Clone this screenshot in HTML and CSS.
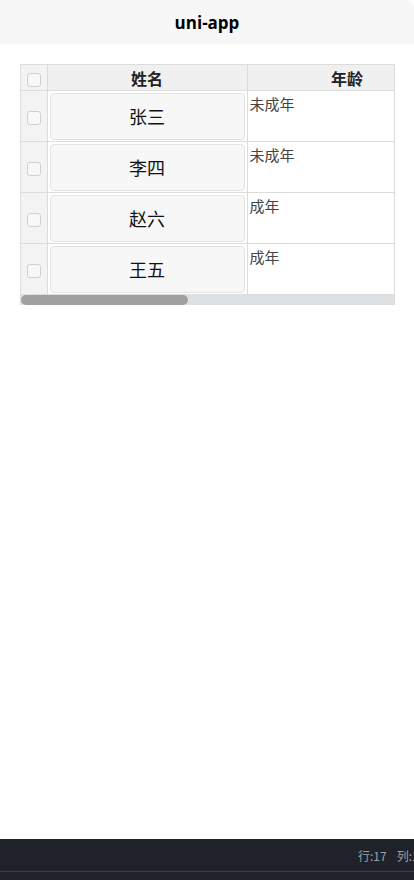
FILE: index.html
```html
<!DOCTYPE html>
<html lang="zh-CN">
<head>
    <meta charset="UTF-8">
    <meta name="viewport" content="width=device-width, initial-scale=1.0">
    <title>uni-app</title>
    <link rel="stylesheet" href="styles.css">
</head>
<body>
    <header class="nav-bar">
        <h1>uni-app</h1>
    </header>
    <main class="page">
        <div class="table-wrap">
            <div class="table-view">
                <table class="data-table">
                    <colgroup>
                        <col class="col-check">
                        <col class="col-main">
                        <col class="col-main">
                    </colgroup>
                    <thead>
                        <tr>
                            <th class="check-cell"><span class="checkbox"></span></th>
                            <th>姓名</th>
                            <th>年龄</th>
                        </tr>
                    </thead>
                    <tbody>
                        <tr>
                            <td class="check-cell"><span class="checkbox"></span></td>
                            <td class="name-cell"><div class="name-box">张三</div></td>
                            <td>未成年</td>
                        </tr>
                        <tr>
                            <td class="check-cell"><span class="checkbox"></span></td>
                            <td class="name-cell"><div class="name-box">李四</div></td>
                            <td>未成年</td>
                        </tr>
                        <tr>
                            <td class="check-cell"><span class="checkbox"></span></td>
                            <td class="name-cell"><div class="name-box">赵六</div></td>
                            <td>成年</td>
                        </tr>
                        <tr>
                            <td class="check-cell"><span class="checkbox"></span></td>
                            <td class="name-cell"><div class="name-box">王五</div></td>
                            <td>成年</td>
                        </tr>
                    </tbody>
                </table>
            </div>
            <div class="scroll-track"><div class="scroll-thumb"></div></div>
        </div>
    </main>
    <footer class="status-bar">
        <div class="status-inner">
            <span class="pos">行:17</span>
            <span class="pos">列:1</span>
        </div>
    </footer>
</body>
</html>
```

FILE: styles.css
```css
* { box-sizing: border-box; }
html, body { margin: 0; padding: 0; }
body { width: 414px; height: 880px; display: flex; flex-direction: column; overflow: hidden; background-color: #fff; color: #333; font-family: "Open Sans", "Noto Sans CJK SC", sans-serif; }

.nav-bar { height: 44px; flex: none; background-color: #f7f7f8; border-top-right-radius: 8px; display: flex; align-items: center; justify-content: center; }
.nav-bar h1 { margin: 0; font-size: 17px; font-weight: bold; color: #000; }

.page { flex: 1; padding: 20px 20px 0; }

.table-wrap { width: 375px; border-left: 1px solid #dcdcdc; border-right: 1px solid #dcdcdc; }
.table-view { overflow: hidden; }

.data-table { border-collapse: collapse; table-layout: fixed; width: 426px; font-family: "Noto Sans CJK SC", sans-serif; }
.col-check { width: 26px; }
.col-main { width: 200px; }
.data-table th, .data-table td { border: 1px solid #dcdcdc; padding: 0; }
.data-table th:first-child, .data-table td:first-child { border-left: none; }
.data-table th { height: 26px; background-color: #f0f0f0; font-size: 16px; font-weight: bold; color: #222; text-align: center; line-height: 24px; }
.data-table td { height: 51px; vertical-align: top; font-size: 15px; line-height: 20px; color: #444; padding: 3px 0 0 2px; }

.data-table .check-cell { background-color: #f3f3f3; vertical-align: middle; text-align: center; padding: 0; }
.checkbox { display: inline-block; width: 14px; height: 14px; border: 1px solid #d0d0d0; border-radius: 3px; background-color: #f8f8f8; vertical-align: middle; }

.data-table .name-cell { padding: 2px 2px 1px; }
.name-box { height: 47px; padding-bottom: 2px; border: 1px solid #e3e3e3; border-radius: 4px; background-color: #f7f7f7; display: flex; align-items: center; justify-content: center; font-size: 18px; color: #111; }

.scroll-track { height: 10px; background-color: #dde1e4; }
.scroll-thumb { width: 167px; height: 10px; border-radius: 5px; background-color: #a0a0a0; }

.status-bar { height: 41px; flex: none; background-color: #1f2329; }
.status-inner { height: 33px; border-bottom: 1px solid #3b4047; display: flex; align-items: center; padding-left: 358px; gap: 10px; white-space: nowrap; overflow: hidden; }
.pos { font-size: 12px; color: #9da1a6; font-family: "Noto Sans CJK SC", sans-serif; }
```
